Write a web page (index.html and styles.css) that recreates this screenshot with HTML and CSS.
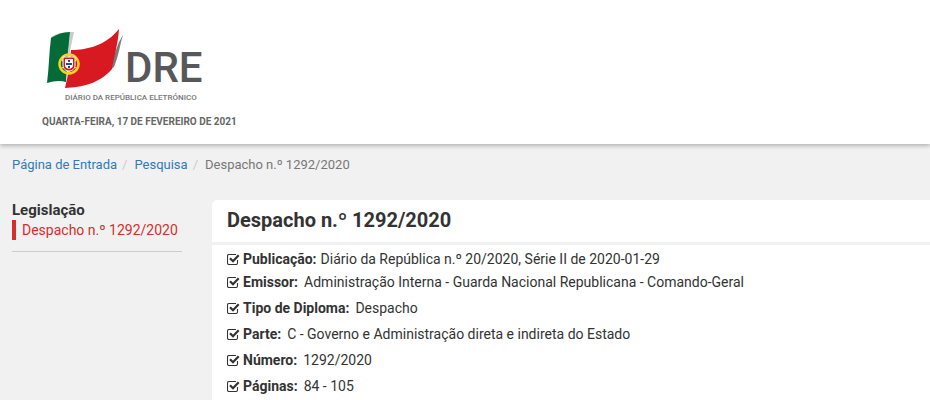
FILE: index.html
```html
<!DOCTYPE html>
<html lang="pt">
<head>
    <meta charset="UTF-8">
    <meta name="viewport" content="width=device-width, initial-scale=1.0">
    <link rel="stylesheet" href="styles.css">
    <title>Despacho n.º 1292/2020</title>
</head>
<body>
    <svg width="0" height="0" class="sprite" aria-hidden="true">
        <symbol id="check" viewBox="0 0 13 12">
            <path d="M10.5 7v3q0 1.5-1.5 1.5H2Q.5 11.5 .5 10V3Q.5 1.5 2 1.5H9" fill="none" stroke="currentColor" stroke-width="1.1"/>
            <path d="M3 5.2l3 3 5.7-5.9" fill="none" stroke="currentColor" stroke-width="2.3"/>
        </symbol>
    </svg>

    <header class="header">
        <a href="#" class="logo">
            <svg width="160" height="78" viewBox="0 0 160 78" role="img" aria-label="DRE">
                <path d="M5 11C11 7 17 6 28 6L24 25L20 50L6 56z" fill="#c9cbcb"/>
                <path d="M73 16L77 9C74 18 73 29 68 41L62 45z" fill="#7c7c7c"/>
                <path d="M5 12C11 8 17 6 24 6C23 12 23 18 22 24L20 56C14 54 7 55 1 57C3 42 3 27 5 12z" fill="#046a38"/>
                <path d="M25 24C42 24 60 19 73 3C72 18 68 31 66 43C53 58 36 61 19 62C22 50 24 37 25 24z" fill="#d81921"/>
                <circle cx="23" cy="38" r="9.5" fill="none" stroke="#f3d51f" stroke-width="2.5"/>
                <path d="M14 33L32 43M14 43L32 33M23 28V48" stroke="#f3d51f" stroke-width="1.4"/>
                <path d="M17 31H29V39C29 47 17 47 17 39z" fill="#d81921" stroke="#fff" stroke-width="1"/>
                <path d="M19 33H27V39C27 44 19 44 19 39z" fill="#fff"/>
                <path d="M22 34h2v2h-2zM20 37h2v2h-2zM22 37h2v2h-2zM24 37h2v2h-2zM22 40h2v2h-2z" fill="#29469b"/>
                <text x="79" y="56" class="logo-name">DRE</text>
                <text x="19" y="74" class="logo-caption">DIÁRIO DA REPÚBLICA ELETRÓNICO</text>
            </svg>
        </a>
        <p class="date">Quarta-feira, 17 de fevereiro de 2021</p>
    </header>

    <nav aria-label="Navegação">
        <ol class="breadcrumb">
            <li><a href="#">Página de Entrada</a></li>
            <li><a href="#">Pesquisa</a></li>
            <li>Despacho n.º 1292/2020</li>
        </ol>
    </nav>

    <div class="content">
        <aside class="sidebar">
            <h2>Legislação</h2>
            <a href="#" class="active">Despacho n.º 1292/2020</a>
        </aside>

        <main class="panel">
            <h1>Despacho n.º 1292/2020</h1>
            <ul class="details">
                <li class="publication"><svg class="check"><use href="#check"/></svg><b>Publicação:</b><span>Diário da República n.º 20/2020, Série II de 2020-01-29</span></li>
                <li><svg class="check"><use href="#check"/></svg><b>Emissor:</b><span>Administração Interna - Guarda Nacional Republicana - Comando-Geral</span></li>
                <li><svg class="check"><use href="#check"/></svg><b>Tipo de Diploma:</b><span>Despacho</span></li>
                <li><svg class="check"><use href="#check"/></svg><b>Parte:</b><span>C - Governo e Administração direta e indireta do Estado</span></li>
                <li><svg class="check"><use href="#check"/></svg><b>Número:</b><span>1292/2020</span></li>
                <li><svg class="check"><use href="#check"/></svg><b>Páginas:</b><span>84 - 105</span></li>
            </ul>
        </main>
    </div>
</body>
</html>
```

FILE: styles.css
```css
body {
    margin: 0;
    background-color: #f1f1f1;
    color: #333;
    font-family: Roboto, sans-serif;
    font-size: 14px;
    line-height: 20px;
}

a {
    color: #337ab7;
    text-decoration: none;
}

.sprite {
    position: absolute;
}

.header {
    background-color: #fff;
    padding: 26px 42px 12px;
    box-shadow: 0 2px 4px rgba(0, 0, 0, 0.25);
}

.logo {
    display: block;
    padding-left: 4px;
}

.logo svg {
    display: block;
}

.logo-name {
    fill: #58585a;
    font-size: 42px;
    font-weight: 500;
}

.logo-caption {
    fill: #777;
    font-size: 8px;
    font-weight: 500;
}

.date {
    margin: 8px 0 0;
    color: #666;
    font-size: 10px;
    font-weight: bold;
    text-transform: uppercase;
}

.breadcrumb {
    display: flex;
    margin: 0;
    padding: 11px 12px 10px;
    list-style: none;
    font-size: 13px;
    color: #777;
}

.breadcrumb li + li::before {
    content: "/";
    padding: 0 7px 0 5px;
    color: #ccc;
}

.content {
    display: flex;
    align-items: flex-start;
    gap: 30px;
    padding: 15px 0 0 12px;
}

.sidebar {
    flex: 0 0 170px;
    padding-bottom: 11px;
    border-bottom: 1px solid #ccc;
}

.sidebar h2 {
    margin: 0;
    font-size: 15px;
    line-height: 20px;
}

.active {
    display: block;
    padding-left: 6px;
    border-left: 4px solid #d32f2f;
    color: #d32f2f;
}

.panel {
    flex: 1;
    min-width: 0;
    background-color: #fff;
    border-radius: 5px 0 0 0;
}

.panel h1 {
    margin: 0;
    padding: 5px 15px 7px;
    border-bottom: 3px solid #f1f1f1;
    font-size: 20px;
    line-height: 30px;
}

.details {
    margin: 0;
    padding: 4px 15px;
    list-style: none;
}

.details li {
    display: flex;
    align-items: center;
    margin-bottom: 6px;
}

.details .publication {
    margin-bottom: 3px;
}

.check {
    width: 13px;
    height: 12px;
    margin-right: 3px;
}

.details b {
    margin-right: 6px;
}

.details .publication b {
    margin-right: 4px;
}
```
